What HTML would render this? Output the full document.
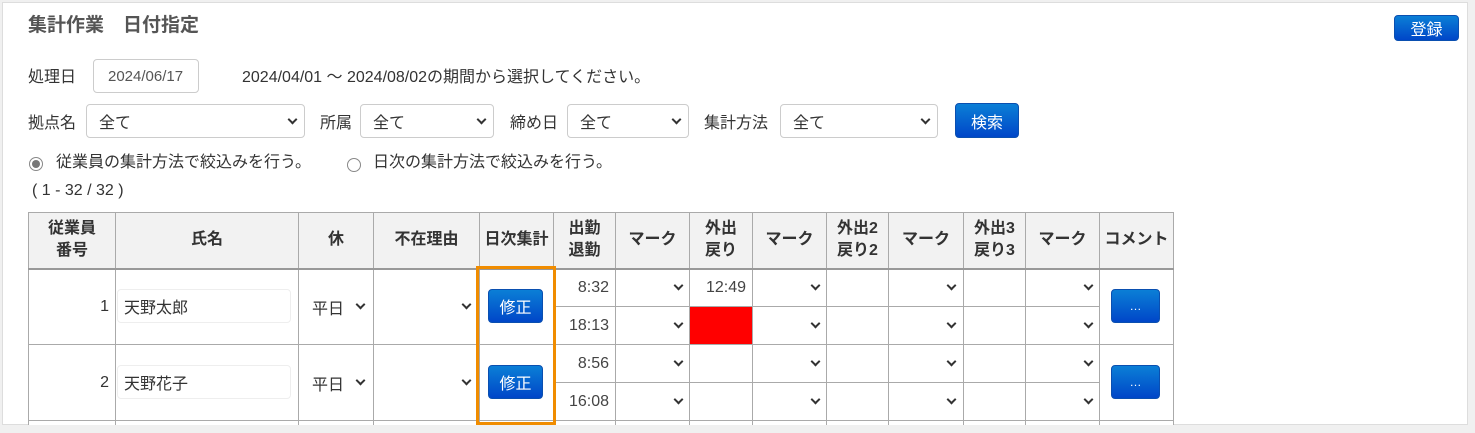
<!DOCTYPE html>
<html style="overflow:hidden;height:433px"><head><meta charset="utf-8"><style>
*{box-sizing:border-box}
body{margin:0;width:1475px;height:433px;background:#f0f0f0;font-family:"Liberation Sans","Noto Sans CJK JP",sans-serif;color:#333;position:relative;overflow:hidden}
.frame{position:absolute;left:2px;top:2px;width:1466px;height:423px;background:#fff;border:1px solid #ddd}
.a{position:absolute;font-size:16px;white-space:nowrap}
.box{position:absolute;border:1px solid #ccc;border-radius:4px;background:#fff;font-size:16px;padding-left:12px;display:flex;align-items:center}
.chev{position:absolute;width:7px;height:7px;border-right:2px solid #333;border-bottom:2px solid #333;transform:rotate(45deg)}
.btn{position:absolute;border-radius:4px;background:linear-gradient(#0b7fd6,#0046c8);color:#fff;font-size:16px;display:flex;align-items:center;justify-content:center;border:1px solid #0a4fb0}
table{position:absolute;left:28px;top:212px;border-collapse:collapse;table-layout:fixed;background:#fff}
td,th{border:1px solid #aaa;padding:0;font-size:16px}
th{background:#f2f2f2;height:56px;font-weight:bold;line-height:22px;color:#333;border-bottom:2px solid #999}
td{height:38px;position:relative}
tr.last td{height:4px;border-bottom:none}
.r{text-align:right;padding-right:6px}
.clip{position:absolute;left:0;top:0;width:1475px;height:425px;overflow:hidden}
</style></head><body>
<div class="frame"></div>
<div class="clip">
<div class="a" style="left:28px;top:10px;font-size:19px;font-weight:bold;color:#555">集計作業　日付指定</div>
<div class="btn" style="left:1394px;top:15px;width:65px;height:26px">登録</div>
<div class="a" style="left:28px;top:63px">処理日</div>
<div class="box" style="left:93px;top:59px;width:106px;height:34px;font-size:15px;color:#555;padding-left:14px">2024/06/17</div>
<div class="a" style="left:242px;top:63px">2024/04/01 ～ 2024/08/02の期間から選択してください。</div>
<div class="a" style="left:28px;top:109px">拠点名</div>
<div class="box" style="left:86px;top:104px;width:219px;height:34px">全て<span class="chev" style="right:8px;top:11px"></span></div>
<div class="a" style="left:320px;top:109px">所属</div>
<div class="box" style="left:360px;top:104px;width:134px;height:34px">全て<span class="chev" style="right:8px;top:11px"></span></div>
<div class="a" style="left:510px;top:109px">締め日</div>
<div class="box" style="left:567px;top:104px;width:122px;height:34px">全て<span class="chev" style="right:8px;top:11px"></span></div>
<div class="a" style="left:704px;top:109px">集計方法</div>
<div class="box" style="left:780px;top:104px;width:158px;height:34px">全て<span class="chev" style="right:8px;top:11px"></span></div>
<div class="btn" style="left:955px;top:103px;width:64px;height:35px">検索</div>
<div style="position:absolute;left:29px;top:157px;width:14px;height:14px;border:1px solid #888;border-radius:50%;"><div style="margin:2px;width:8px;height:8px;border-radius:50%;background:#777"></div></div>
<div class="a" style="left:56px;top:148px">従業員の集計方法で絞込みを行う。</div>
<div style="position:absolute;left:347px;top:158px;width:14px;height:14px;border:1px solid #888;border-radius:50%;"></div>
<div class="a" style="left:373px;top:148px">日次の集計方法で絞込みを行う。</div>
<div class="a" style="left:32px;top:182px">( 1 - 32 / 32 )</div>
<table>
<colgroup><col style="width:87px"><col style="width:183px"><col style="width:75px"><col style="width:106px"><col style="width:74px"><col style="width:62px"><col style="width:74px"><col style="width:63px"><col style="width:74px"><col style="width:62px"><col style="width:75px"><col style="width:62px"><col style="width:74px"><col style="width:74px"></colgroup>
<tr><th>従業員<br>番号</th><th>氏名</th><th>休</th><th>不在理由</th><th>日次集計</th><th>出勤<br>退勤</th><th>マーク</th><th>外出<br>戻り</th><th>マーク</th><th>外出2<br>戻り2</th><th>マーク</th><th>外出3<br>戻り3</th><th>マーク</th><th>コメント</th></tr>
<tr><td rowspan="2" class="r">1</td><td rowspan="2"></td><td rowspan="2"></td><td rowspan="2"></td><td rowspan="2"></td><td class="r" style="color:#444">8:32</td><td></td><td class="r" style="color:#444">12:49</td><td></td><td></td><td></td><td></td><td></td><td rowspan="2"></td></tr>
<tr><td class="r" style="color:#444">18:13</td><td></td><td style="background:#f00"></td><td></td><td></td><td></td><td></td><td></td></tr>
<tr><td rowspan="2" class="r">2</td><td rowspan="2"></td><td rowspan="2"></td><td rowspan="2"></td><td rowspan="2"></td><td class="r" style="color:#444">8:56</td><td></td><td></td><td></td><td></td><td></td><td></td><td></td><td rowspan="2"></td></tr>
<tr><td class="r" style="color:#444">16:08</td><td></td><td></td><td></td><td></td><td></td><td></td><td></td></tr>
<tr class="last"><td></td><td></td><td></td><td></td><td></td><td></td><td></td><td></td><td></td><td></td><td></td><td></td><td></td><td></td></tr>
</table>
<div class="box" style="left:117px;top:289px;width:174px;height:34px;border-color:#eee;padding-left:6px;align-items:flex-start;padding-top:4px">天野太郎</div>
<div class="box" style="left:117px;top:365px;width:174px;height:34px;border-color:#eee;padding-left:6px;align-items:flex-start;padding-top:4px">天野花子</div>
<div class="a" style="left:312px;top:295px">平日</div><span class="chev" style="left:357px;top:301px;width:7px;height:7px;border-width:2px"></span>
<div class="a" style="left:312px;top:371px">平日</div><span class="chev" style="left:357px;top:377px;width:7px;height:7px;border-width:2px"></span>
<span class="chev" style="left:463px;top:301px;width:7px;height:7px;border-width:2px"></span>
<span class="chev" style="left:463px;top:377px;width:7px;height:7px;border-width:2px"></span>
<span class="chev" style="left:675px;top:282px;width:7px;height:7px;border-width:2px"></span>
<span class="chev" style="left:675px;top:320px;width:7px;height:7px;border-width:2px"></span>
<span class="chev" style="left:675px;top:358px;width:7px;height:7px;border-width:2px"></span>
<span class="chev" style="left:675px;top:396px;width:7px;height:7px;border-width:2px"></span>
<span class="chev" style="left:812px;top:282px;width:7px;height:7px;border-width:2px"></span>
<span class="chev" style="left:812px;top:320px;width:7px;height:7px;border-width:2px"></span>
<span class="chev" style="left:812px;top:358px;width:7px;height:7px;border-width:2px"></span>
<span class="chev" style="left:812px;top:396px;width:7px;height:7px;border-width:2px"></span>
<span class="chev" style="left:948px;top:282px;width:7px;height:7px;border-width:2px"></span>
<span class="chev" style="left:948px;top:320px;width:7px;height:7px;border-width:2px"></span>
<span class="chev" style="left:948px;top:358px;width:7px;height:7px;border-width:2px"></span>
<span class="chev" style="left:948px;top:396px;width:7px;height:7px;border-width:2px"></span>
<span class="chev" style="left:1085px;top:282px;width:7px;height:7px;border-width:2px"></span>
<span class="chev" style="left:1085px;top:320px;width:7px;height:7px;border-width:2px"></span>
<span class="chev" style="left:1085px;top:358px;width:7px;height:7px;border-width:2px"></span>
<span class="chev" style="left:1085px;top:396px;width:7px;height:7px;border-width:2px"></span>
<div class="btn" style="left:488px;top:289px;width:55px;height:34px">修正</div>
<div class="btn" style="left:488px;top:365px;width:55px;height:34px">修正</div>
<div class="btn" style="left:1111px;top:289px;width:49px;height:34px;font-size:12px">…</div>
<div class="btn" style="left:1111px;top:365px;width:49px;height:34px;font-size:12px">…</div>
<div style="position:absolute;left:476px;top:266px;width:80px;height:159px;border:3px solid #f08c00"></div>
</div>
</body></html>
